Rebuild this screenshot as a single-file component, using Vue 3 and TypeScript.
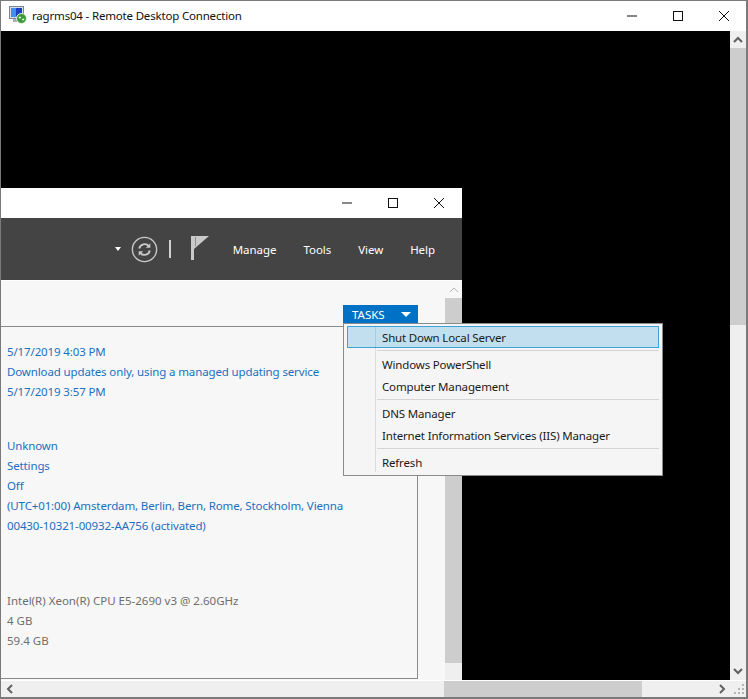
<script setup lang="ts">
interface Row {
  text: string
  kind?: 'link' | 'muted'
  gap?: number
}

const rows: Row[] = [
  { text: '5/17/2019 4:03 PM', kind: 'link' },
  { text: 'Download updates only, using a managed updating service', kind: 'link' },
  { text: '5/17/2019 3:57 PM', kind: 'link' },
  { text: 'Unknown', kind: 'link', gap: 34 },
  { text: 'Settings', kind: 'link' },
  { text: 'Off', kind: 'link' },
  { text: '(UTC+01:00) Amsterdam, Berlin, Bern, Rome, Stockholm, Vienna', kind: 'link' },
  { text: '00430-10321-00932-AA756 (activated)', kind: 'link' },
  { text: 'Intel(R) Xeon(R) CPU E5-2690 v3 @ 2.60GHz', kind: 'muted', gap: 55 },
  { text: '4 GB', kind: 'muted' },
  { text: '59.4 GB', kind: 'muted' },
]

const navItems = ['Manage', 'Tools', 'View', 'Help']

const menuGroups: string[][] = [
  ['Shut Down Local Server'],
  ['Windows PowerShell', 'Computer Management'],
  ['DNS Manager', 'Internet Information Services (IIS) Manager'],
  ['Refresh'],
]
</script>

<template>
  <div class="rdp-window">
    <header class="rdp-title">
      <svg class="rdp-icon" width="18" height="18" viewBox="0 0 18 18" aria-hidden="true">
        <rect x="0.5" y="0.5" width="14" height="12" fill="#d9dde6" stroke="#7b8296" />
        <rect x="2" y="2" width="11" height="9" fill="#1c3fc4" />
        <rect x="2" y="2" width="5" height="9" fill="#3f8fee" />
        <rect x="4" y="13" width="8" height="3" fill="#a9adb8" />
        <circle cx="12.5" cy="12.5" r="5" fill="#3c9a3c" stroke="#e7f3e0" />
        <path d="M9.8 11.5h2M13.2 13.5h2" stroke="#fff" stroke-width="1.3" />
      </svg>
      <span class="rdp-name">ragrms04 - Remote Desktop Connection</span>
      <div class="caption-btns">
        <button class="caption"><svg width="12" height="12" viewBox="0 0 12 12"><path d="M1 6h10" stroke="#111" /></svg></button>
        <button class="caption"><svg width="12" height="12" viewBox="0 0 12 12"><rect x="1.5" y="1.5" width="9" height="9" fill="none" stroke="#111" /></svg></button>
        <button class="caption"><svg width="12" height="12" viewBox="0 0 12 12"><path d="M1 1l10 10M11 1L1 11" stroke="#111" /></svg></button>
      </div>
    </header>

    <div class="rdp-body">
      <div class="viewport">
        <section class="server-window">
          <div class="sm-title">
            <button class="caption"><svg width="12" height="12" viewBox="0 0 12 12"><path d="M1 6h10" stroke="#111" /></svg></button>
            <button class="caption"><svg width="12" height="12" viewBox="0 0 12 12"><rect x="1.5" y="1.5" width="9" height="9" fill="none" stroke="#111" /></svg></button>
            <button class="caption"><svg width="12" height="12" viewBox="0 0 12 12"><path d="M1 1l10 10M11 1L1 11" stroke="#111" /></svg></button>
          </div>

          <nav class="sm-nav">
            <span class="nav-caret"></span>
            <svg class="refresh" width="27" height="27" viewBox="0 0 28 28" aria-hidden="true">
              <circle cx="14" cy="14" r="12.6" fill="none" stroke="#c9c9c9" stroke-width="1.4" />
              <path d="M8.5 13a5.8 5.8 0 0 1 10-2.6" fill="none" stroke="#c9c9c9" stroke-width="2" />
              <path d="M20 7.5v4.6h-4.6z" fill="#c9c9c9" />
              <path d="M19.5 15a5.8 5.8 0 0 1-10 2.6" fill="none" stroke="#c9c9c9" stroke-width="2" />
              <path d="M8 20.5v-4.6h4.6z" fill="#c9c9c9" />
            </svg>
            <span class="nav-sep"></span>
            <svg class="flag" width="18" height="24" viewBox="0 0 18 24" aria-hidden="true">
              <rect x="0" y="0" width="3" height="24" fill="#c9c9c9" />
              <path d="M3 0h15L3 13z" fill="#c9c9c9" />
              <rect x="4" y="1" width="1" height="9" fill="#8c8c8c" />
            </svg>
            <span v-for="item in navItems" :key="item" class="nav-item">{{ item }}</span>
          </nav>

          <div class="sm-content">
            <div class="sm-main">
              <div class="tasks-row">
                <div class="tasks-btn">
                  <span>TASKS</span>
                  <span class="tasks-caret"></span>
                </div>
              </div>
              <div class="panel">
                <div
                  v-for="row in rows"
                  :key="row.text"
                  :class="['row', row.kind]"
                  :style="row.gap ? { marginTop: row.gap + 'px' } : undefined"
                >{{ row.text }}</div>
              </div>
            </div>
            <div class="sm-scroll">
              <div class="sm-arrow">
                <svg width="10" height="6" viewBox="0 0 10 6"><path d="M1 5l4-4 4 4" fill="none" stroke="#b5b5b5" stroke-width="1" /></svg>
              </div>
              <div class="sm-thumb"></div>
            </div>

            <div class="tasks-menu">
              <div class="menu-gutter"></div>
              <template v-for="(group, i) in menuGroups" :key="i">
                <div v-if="i > 0" class="menu-sep"></div>
                <div
                  v-for="item in group"
                  :key="item"
                  :class="['menu-item', { active: i === 0 }]"
                >{{ item }}</div>
              </template>
            </div>
          </div>
        </section>
      </div>

      <div class="v-scroll">
        <div class="v-arrow">
          <svg width="10" height="7" viewBox="0 0 10 7"><path d="M1 6l4-4 4 4" fill="none" stroke="#606060" stroke-width="2" /></svg>
        </div>
        <div class="v-thumb"></div>
        <div class="v-track"></div>
        <div class="v-arrow">
          <svg width="10" height="7" viewBox="0 0 10 7"><path d="M1 1l4 4 4-4" fill="none" stroke="#606060" stroke-width="2" /></svg>
        </div>
      </div>
    </div>

    <div class="h-scroll">
      <div class="h-arrow">
        <svg width="7" height="10" viewBox="0 0 7 10"><path d="M6 1L2 5l4 4" fill="none" stroke="#606060" stroke-width="2" /></svg>
      </div>
      <div class="h-space"></div>
      <div class="h-thumb"></div>
      <div class="h-track"></div>
      <div class="h-arrow">
        <svg width="7" height="10" viewBox="0 0 7 10"><path d="M1 1l4 4-4 4" fill="none" stroke="#606060" stroke-width="2" /></svg>
      </div>
      <svg class="grip" width="14" height="14" viewBox="0 0 14 14" aria-hidden="true">
        <path d="M10 2h2v2h-2zM10 6h2v2h-2zM6 6h2v2H6zM10 10h2v2h-2zM6 10h2v2H6zM2 10h2v2H2z" fill="#b5b5b5" />
      </svg>
    </div>
  </div>
</template>

<style>
html,
body {
  margin: 0;
  background: #fff;
}
</style>

<style scoped>
.rdp-window {
  width: 748px;
  height: 699px;
  box-sizing: border-box;
  border: 1px solid #7a7a7a;
  border-bottom-width: 2px;
  border-right-width: 2px;
  display: flex;
  flex-direction: column;
  overflow: hidden;
  font-family: "Noto Sans", "Open Sans", sans-serif;
  font-size: 11.5px;
  letter-spacing: -0.13px;
  background: #fff;
}

.rdp-title {
  height: 30px;
  flex: none;
  display: flex;
  align-items: center;
  background: #fff;
}

.rdp-icon {
  margin: 0 0 2px 8px;
  flex: none;
}

.rdp-name {
  margin: 0 0 2px 5px;
  font-size: 11.5px;
  letter-spacing: -0.18px;
  color: #111;
  white-space: nowrap;
}

.caption-btns {
  margin-left: auto;
  margin-right: -1px;
  display: flex;
}

.caption {
  width: 46px;
  height: 30px;
  padding: 0;
  border: 0;
  background: none;
  display: flex;
  align-items: center;
  justify-content: center;
}

.rdp-body {
  flex: 1;
  display: flex;
  min-height: 0;
}

.viewport {
  flex: 1;
  background: #000;
  padding-top: 157px;
  min-width: 0;
  display: flex;
}

.v-scroll {
  width: 16px;
  flex: none;
  display: flex;
  flex-direction: column;
  background: #efefef;
}

.v-arrow {
  height: 17px;
  flex: none;
  display: flex;
  align-items: center;
  justify-content: center;
}

.v-thumb {
  height: 277px;
  flex: none;
  background: #cdcdcd;
}

.v-track {
  flex: 1;
}

.h-scroll {
  height: 16px;
  flex: none;
  margin-top: 1px;
  display: flex;
  align-items: center;
  background: #efefef;
}

.h-arrow {
  width: 16px;
  height: 16px;
  flex: none;
  display: flex;
  align-items: center;
  justify-content: center;
}

.h-space {
  width: 427px;
  flex: none;
}

.h-thumb {
  width: 198px;
  height: 16px;
  flex: none;
  background: #cdcdcd;
}

.h-track {
  flex: 1;
}

.grip {
  flex: none;
  margin-left: 2px;
}

/* server manager, cut off by the session viewport */
.server-window {
  width: 461px;
  flex: none;
  display: flex;
  flex-direction: column;
  background: #fff;
}

.sm-title {
  height: 30px;
  flex: none;
  display: flex;
  justify-content: flex-end;
}

.sm-nav {
  height: 62px;
  flex: none;
  display: flex;
  align-items: center;
  justify-content: flex-end;
  background: #444;
  padding-right: 27px;
  color: #fff;
}

.nav-caret {
  width: 0;
  height: 0;
  border: 3.5px solid transparent;
  border-top: 4px solid #fff;
  border-bottom: 0;
  margin-right: 10px;
}

.refresh {
  flex: none;
}

.nav-sep {
  width: 2px;
  height: 18px;
  background: #d0d0d0;
  margin: 0 20px 0 11px;
}

.flag {
  flex: none;
  margin-right: -3px;
  margin-bottom: 2px;
}

.nav-item {
  font-size: 11.5px;
  letter-spacing: -0.05px;
  margin-left: 27px;
}

.sm-content {
  flex: 1;
  position: relative;
  display: flex;
  min-height: 0;
  background: #f7f7f7;
  border-top: 1px solid #fff;
}

.sm-main {
  width: 444px;
  flex: none;
}

.tasks-row {
  height: 45px;
  display: flex;
  justify-content: flex-end;
  padding: 24px 27px 0 0;
  box-sizing: border-box;
}

.tasks-btn {
  width: 75px;
  height: 18px;
  background: #0072c6;
  color: #fff;
  letter-spacing: 0;
  display: flex;
  align-items: center;
  padding: 0 7px 0 9px;
  box-sizing: border-box;
  justify-content: space-between;
}

.tasks-caret {
  width: 0;
  height: 0;
  border: 5px solid transparent;
  border-top: 5px solid #fff;
  border-bottom: 0;
}

.panel {
  width: 417px;
  height: 353px;
  box-sizing: border-box;
  border: 1px solid #8a8a8a;
  border-left-width: 0;
  padding: 15px 0 0 6px;
}

.row {
  height: 20px;
  line-height: 20px;
  white-space: nowrap;
}

.row.link {
  color: #1b6fc0;
}

.row.muted {
  color: #6e6e6e;
  letter-spacing: 0;
}

.sm-scroll {
  width: 17px;
  flex: none;
  display: flex;
  flex-direction: column;
  background: #efefef;
}

.sm-arrow {
  height: 17px;
  flex: none;
  background: #f7f7f7;
  display: flex;
  align-items: center;
  justify-content: center;
}

.sm-thumb {
  height: 365px;
  flex: none;
  background: #cdcdcd;
}

.tasks-menu {
  position: absolute;
  left: 342px;
  top: 42px;
  width: 320px;
  height: 153px;
  box-sizing: border-box;
  border: 1px solid #8a8a8a;
  background: #f5f5f5;
  padding: 2px 3px;
  z-index: 2;
  letter-spacing: -0.16px;
}

.menu-gutter {
  position: absolute;
  left: 31px;
  top: 3px;
  bottom: 3px;
  width: 1px;
  background: rgba(0, 0, 0, 0.09);
  z-index: 1;
}

.menu-item {
  position: relative;
  height: 22px;
  line-height: 22px;
  padding: 1px 0 0 35px;
  color: #1a1a1a;
  white-space: nowrap;
  box-sizing: border-box;
}

.menu-item.active {
  background: #c1dfee;
  border: 1px solid #3da2dc;
  line-height: 20px;
  padding: 1px 0 0 34px;
}

.menu-sep {
  position: relative;
  height: 1px;
  margin: 2px 0 2px 30px;
  background: #d4d4d4;
}
</style>
